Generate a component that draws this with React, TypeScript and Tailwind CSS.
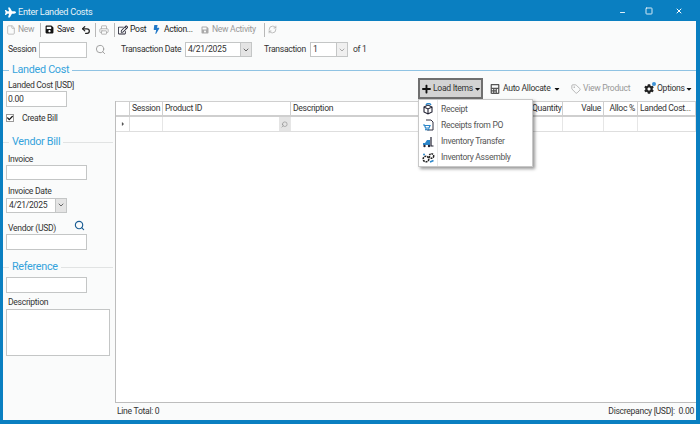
import React from "react";
import { File, Search, Tag, ChevronDown, RefreshCw, Printer, X, Minus, Square, Undo2 } from "lucide-react";
import { FaPlane, FaSave, FaBolt, FaPlus, FaCalculator, FaCog, FaRegEdit, FaCaretDown, FaCheck, FaCaretRight } from "react-icons/fa";

const Sep = ({ className = "mx-[4px]" }: { className?: string }) => <div className={`w-px h-[14px] bg-[#b8b8b8] ${className}`} />;

const Input = ({ className = "", children }: { className?: string; children?: React.ReactNode }) => (
  <div className={`border border-[#c4c6c6] bg-white text-[8.6px] leading-none text-[#333] flex items-center pl-[1px] ${className}`}>{children}</div>
);

const DateBox = ({ text, className = "", faded = false }: { text: string; className?: string; faded?: boolean }) => (
  <div className={`border border-[#c4c6c6] bg-white text-[8.6px] text-[#333] flex items-center justify-between pl-[2px] ${className}`}>
    <span>{text}</span>
    <span className={`w-[11px] self-stretch border-l border-[#c4c6c6] flex items-center justify-center ${faded ? "bg-[#f0f0f0]" : "bg-[#e4e4e4]"}`}>
      <ChevronDown size={8} strokeWidth={3} color={faded ? "#aaa" : "#666"} />
    </span>
  </div>
);

const Heading = ({ text, className = "" }: { text: string; className?: string }) => (
  <div className={`flex items-center ${className}`}>
    <div className="w-[6px] h-px bg-[#e1e3e3]" />
    <span className="text-[10.8px] text-[#35a3dc] px-[3px] leading-none">{text}</span>
    <div className="flex-1 h-px bg-[#e1e3e3]" />
  </div>
);

const Label = ({ children, className = "" }: { children: React.ReactNode; className?: string }) => (
  <div className={`text-[8.6px] leading-[12px] text-[#333] pl-[2px] whitespace-nowrap ${className}`}>{children}</div>
);

const cols = [
  { t: "Session", w: "w-[33px]", a: "text-left" },
  { t: "Product ID", w: "w-[128px]", a: "text-left" },
  { t: "Description", w: "flex-1", a: "text-left" },
  { t: "Quantity", w: "w-[33px]", a: "text-right" },
  { t: "Value", w: "w-[41px]", a: "text-right" },
  { t: "Alloc %", w: "w-[34px]", a: "text-right" },
  { t: "Landed Cost...", w: "w-[58px]", a: "text-left" },
];

const ReceiptIcon = () => (
  <svg width="12" height="12" viewBox="0 0 12 12" fill="none">
    <path d="M2 4 L6 2 L10 4 V9 L6 11 L2 9 Z M2 4 L6 6 L10 4 M6 6 V11" stroke="#223" strokeWidth="1.1" />
    <path d="M4 2 C5 0 8 0 9 2" stroke="#2b86c9" strokeWidth="1.3" />
  </svg>
);
const PoIcon = () => (
  <svg width="12" height="12" viewBox="0 0 12 12" fill="none">
    <path d="M4 1 H9 L11 3 V11 H5" stroke="#334" strokeWidth="1" />
    <path d="M1 6 H2.5 L3.5 9 H7 L8 6.5 H3" stroke="#2b86c9" strokeWidth="1.2" />
    <circle cx="4" cy="10.5" r="1" fill="#2b86c9" />
    <circle cx="6.5" cy="10.5" r="1" fill="#2b86c9" />
  </svg>
);
const TransferIcon = () => (
  <svg width="12" height="12" viewBox="0 0 12 12" fill="none">
    <path d="M1 9 H8 V4 H5 L3 7 H1 Z" fill="#2b86c9" />
    <path d="M9 1 V10 H11.5" stroke="#223" strokeWidth="1.2" />
    <circle cx="2.5" cy="10" r="1.2" fill="#223" />
    <circle cx="7" cy="10" r="1.2" fill="#223" />
  </svg>
);
const AssemblyIcon = () => (
  <svg width="13" height="12" viewBox="0 0 13 12" fill="none">
    <circle cx="4" cy="7" r="2.8" stroke="#222" strokeWidth="1.6" strokeDasharray="2 0.8" />
    <circle cx="9.5" cy="4" r="2.2" stroke="#222" strokeWidth="1.5" strokeDasharray="1.6 0.7" />
    <path d="M8 10 L11.5 8.5" stroke="#2b86c9" strokeWidth="1.5" />
    <circle cx="2" cy="2.5" r="1" fill="#2b86c9" />
  </svg>
);

const menu = [
  { t: "Receipt", I: ReceiptIcon },
  { t: "Receipts from PO", I: PoIcon },
  { t: "Inventory Transfer", I: TransferIcon },
  { t: "Inventory Assembly", I: AssemblyIcon },
];

export default function App() {
  return (
    <div className="w-[700px] h-[424px] bg-[#0a7fc1] flex flex-col overflow-hidden tracking-[-0.3px]" style={{ fontFamily: 'Roboto, "Noto Sans", sans-serif' }}>
      <div className="h-[21px] flex items-center text-white shrink-0 pl-[5px] pt-[3px]">
        <FaPlane size={11} />
        <span className="text-[9.2px] ml-[2px] opacity-90 whitespace-nowrap">Enter Landed Costs</span>
        <div className="ml-auto flex items-center -mt-[3px]">
          <Minus size={7} strokeWidth={3} className="mr-[19px] mt-[4px]" />
          <Square size={8} strokeWidth={2.5} className="mr-[22px]" />
          <X size={8} strokeWidth={3} className="mr-[17px]" />
        </div>
      </div>
      <div className="flex-1 ml-[3px] mb-[4px] mr-[4px] bg-[#fafbfb] flex flex-col min-h-0">
        <div className="h-[17px] flex items-center pl-[3px] text-[8.6px] text-[#222] shrink-0 whitespace-nowrap">
          <File size={10} color="#b5b5b5" />
          <span className="ml-[2px] w-[16px] text-[#999]">New</span>
          <Sep className="ml-[6px] mr-[4px]" />
          <FaSave size={9} color="#111" />
          <span className="ml-[3px] w-[17px]">Save</span>
          <Undo2 size={10} strokeWidth={3} color="#222" className="ml-[7px]" />
          <Sep className="ml-[4px] mr-[3px]" />
          <Printer size={10} color="#aaa" />
          <Sep className="ml-[5px] mr-[3px]" />
          <FaRegEdit size={10} color="#223" />
          <span className="ml-[2px] w-[16px]">Post</span>
          <FaBolt size={9} color="#1f78c8" className="ml-[6px]" />
          <span className="ml-[3px] w-[30px]">Action...</span>
          <FaSave size={8} color="#aaa" className="ml-[7px]" />
          <span className="ml-[3px] w-[46px] text-[#999]">New Activity</span>
          <Sep className="ml-[6px] mr-[3px]" />
          <RefreshCw size={9} color="#aaa" />
        </div>
        <div className="h-[23px] flex items-center pl-[5px] text-[8.6px] text-[#333] shrink-0 whitespace-nowrap">
          <span className="w-[26px]">Session</span>
          <Input className="w-[48px] h-[16px] ml-[5px]" />
          <Search size={11} color="#999" className="ml-[8px]" />
          <span className="ml-[15px] w-[58px]">Transaction Date</span>
          <DateBox text="4/21/2025" className="w-[67px] h-[15px] ml-[6px]" />
          <span className="ml-[12px] w-[41px]">Transaction</span>
          <DateBox text="1" faded className="w-[38px] h-[15px] ml-[5px]" />
          <span className="ml-[5px]">of 1</span>
        </div>
        <div className="flex items-center mt-[2px] h-[14px] shrink-0">
          <div className="w-[6px] h-px bg-[#8fc3e3]" />
          <span className="text-[10.8px] text-[#35a3dc] px-[3px] leading-none whitespace-nowrap">Landed Cost</span>
          <div className="flex-1 h-px bg-[#8fc3e3]" />
        </div>
        <div className="flex flex-1 min-h-0 pt-[2px]">
          <div className="w-[112px] shrink-0 flex flex-col pl-[3px] pr-[3px]">
            <Label>Landed Cost [USD]</Label>
            <Input className="w-[61px] h-[16px]">0.00</Input>
            <div className="flex items-center mt-[5px] h-[12px]">
              <div className="w-[8px] h-[8px] border border-[#999] bg-white flex items-center justify-center">
                <FaCheck size={6} color="#111" />
              </div>
              <span className="text-[8.6px] text-[#333] ml-[8px]">Create Bill</span>
            </div>
            <Heading text="Vendor Bill" className="mt-[13px] -ml-[3px] -mr-[1px]" />
            <Label className="mt-[5px]">Invoice</Label>
            <Input className="w-[81px] h-[15px]" />
            <Label className="mt-[5px]">Invoice Date</Label>
            <DateBox text="4/21/2025" className="w-[61px] h-[15px] mt-[1px]" />
            <div className="flex items-start mt-[9px] h-[12px]">
              <Label className="w-[68px]">Vendor (USD)</Label>
              <Search size={11} color="#1d5f95" strokeWidth={2.5} className="-mt-[2px]" />
            </div>
            <Input className="w-[81px] h-[16px]" />
            <Heading text="Reference" className="mt-[12px] -ml-[3px] -mr-[1px]" />
            <Input className="w-[81px] h-[16px] mt-[4px]" />
            <Label className="mt-[3px]">Description</Label>
            <Input className="w-[104px] h-[47px] mt-[1px]" />
          </div>
          <div className="flex-1 min-w-0 relative flex flex-col">
            <div className="h-[23px] flex items-start text-[8.6px] text-[#333] shrink-0 -mt-[1px] whitespace-nowrap">
              <div className="ml-[303px] w-[65px] h-[21px] border-[2px] border-[#6f6f6f] bg-[#d3d3d3] flex items-center pl-[2px]">
                <FaPlus size={10} color="#111" />
                <span className="ml-[2px]">Load Items</span>
                <FaCaretDown size={8} color="#111" className="ml-[1px]" />
              </div>
              <div className="h-[21px] flex items-center flex-1">
                <FaCalculator size={10} color="#555" className="ml-[7px]" />
                <span className="ml-[3px] w-[50px]">Auto Allocate</span>
                <FaCaretDown size={8} color="#111" />
                <Tag size={10} color="#aaa" className="ml-[10px]" />
                <span className="ml-[2px] w-[47px] text-[#999]">View Product</span>
                <span className="relative ml-[14px]">
                  <FaCog size={10} color="#222" />
                  <span className="absolute -right-[2px] -top-[2px] w-[4px] h-[4px] rounded-full bg-[#3d93d6]" />
                </span>
                <span className="ml-[3px] w-[28px]">Options</span>
                <FaCaretDown size={8} color="#111" />
              </div>
            </div>
            <div className="flex-1 min-h-0 bg-white border-l border-b border-[#bdbdbd] flex flex-col">
              <div className="h-[16px] flex border-b-[2px] border-t border-[#cfcfcf] bg-white shrink-0">
                <div className="w-[14px] border-r border-[#cfcfcf]" />
                {cols.map((c) => (
                  <div key={c.t} className={`${c.w} ${c.a} border-r border-[#cfcfcf] text-[8.6px] leading-[13px] text-[#333] px-[2px] whitespace-nowrap overflow-hidden`}>{c.t}</div>
                ))}
              </div>
              <div className="h-[15px] flex border-b border-[#dedede] shrink-0">
                <div className="w-[14px] border-r border-[#dedede] flex items-center justify-center">
                  <FaCaretRight size={6} color="#555" />
                </div>
                {cols.map((c) => (
                  <div key={c.t} className={`${c.w} border-r border-[#e6e6e6] flex justify-end`}>
                    {c.t === "Product ID" && (
                      <span className="w-[11px] bg-[#e4e4e4] flex items-center justify-center">
                        <Search size={7} color="#888" className="-scale-x-100" />
                      </span>
                    )}
                  </div>
                ))}
              </div>
            </div>
            <div className="h-[17px] flex items-center justify-between text-[8.6px] text-[#333] pl-[2px] pr-[2px] shrink-0">
              <span>Line Total: 0</span>
              <span>Discrepancy [USD]:&nbsp; 0.00</span>
            </div>
            <div className="absolute left-[303px] top-[20px] w-[115px] h-[68px] bg-white border border-[#c8c8c8] shadow-[2px_2px_3px_rgba(0,0,0,0.4)] flex">
              <div className="w-[19px] border-r border-[#e8e8e8] flex flex-col pt-[1px]">
                {menu.map((m) => (
                  <div key={m.t} className="h-[16.3px] flex items-center justify-center">
                    <m.I />
                  </div>
                ))}
              </div>
              <div className="flex-1 flex flex-col pt-[1px] pl-[3px]">
                {menu.map((m) => (
                  <div key={m.t} className="h-[16.3px] flex items-center text-[8.6px] text-[#555]">{m.t}</div>
                ))}
              </div>
            </div>
          </div>
        </div>
      </div>
    </div>
  );
}
